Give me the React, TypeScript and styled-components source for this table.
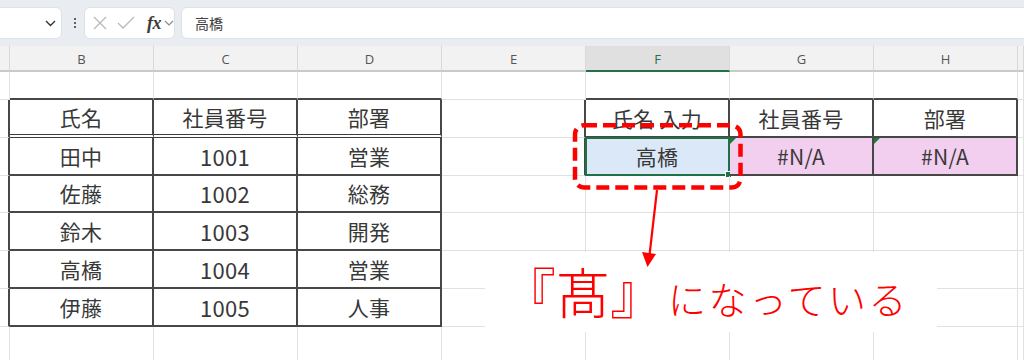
import React from "react";
import styled, { createGlobalStyle } from "styled-components";

const Global = createGlobalStyle`
  html, body { margin: 0; padding: 0; background: #ffffff; }
  body { width: 1024px; height: 360px; overflow: hidden; font-family: "Noto Sans CJK JP", "Noto Sans", sans-serif; }
`;

const Page = styled.div`
  position: relative;
  width: 1024px;
  height: 360px;
  overflow: hidden;
  background: #ffffff;
`;

/* ---------- Formula toolbar ---------- */
const Toolbar = styled.div`
  height: 46px;
  box-sizing: border-box;
  padding-top: 7px;
  background: #e9edf1;
  display: flex;
  align-items: flex-start;
`;

const Box = styled.div<{ $w?: string; $ml?: string }>`
  height: 32px;
  box-sizing: border-box;
  background: #ffffff;
  border: 1px solid #dde2e7;
  border-radius: 6px;
  display: flex;
  align-items: center;
  width: ${(p) => p.$w || "auto"};
  margin-left: ${(p) => p.$ml || "0"};
`;

const NameBox = styled(Box)`
  justify-content: flex-end;
  padding-right: 5px;
`;

const FxBox = styled(Box)`
  padding-left: 8px;
`;

const FormulaBox = styled(Box)`
  flex: 1;
  margin-right: -20px;
  padding-left: 13px;
  font-size: 14px;
  color: #404040;
`;

const Dots = styled.div`
  width: 12px;
  height: 32px;
  display: flex;
  flex-direction: column;
  align-items: center;
  justify-content: center;
  gap: 2px;
  margin: 0 3px 0 7px;
  & > span {
    width: 2px;
    height: 2px;
    border-radius: 1px;
    background: #333;
  }
`;

const Fx = styled.span`
  font-family: "Liberation Serif", serif;
  font-style: italic;
  font-weight: bold;
  font-size: 18px;
  color: #3a3a3a;
  margin-left: 12px;
  letter-spacing: -0.5px;
`;

/* ---------- Sheet grid ---------- */
const Sheet = styled.div`
  display: grid;
  grid-template-columns: 10px repeat(7, 144px) 1fr;
  grid-template-rows: 26px 28px repeat(7, 37.8px);
`;

const ColHead = styled.div<{ $sel?: boolean }>`
  box-sizing: border-box;
  background: ${(p) => (p.$sel ? "#e0e0e0" : "#f2f2f2")};
  border-right: 1px solid #d8d8d8;
  border-bottom: ${(p) => (p.$sel ? "2px solid #217346" : "2px solid #c9c9c9")};
  display: flex;
  align-items: center;
  justify-content: center;
  font-family: "Open Sans", "Noto Sans", sans-serif;
  font-size: 13px;
  color: ${(p) => (p.$sel ? "#2f6e45" : "#555555")};
  padding-top: 1px;
`;

type Edge = "grid" | "thin" | "double";

const edge = (e: Edge) =>
  e === "thin"
    ? "2px solid #474747"
    : e === "double"
    ? "4px double #3d3d3d"
    : "1px solid #e1e1e1";

const Cell = styled.div<{ $r?: Edge; $b?: Edge; $fill?: string; $num?: boolean }>`
  position: relative;
  box-sizing: border-box;
  border-right: ${(p) => edge(p.$r || "grid")};
  border-bottom: ${(p) => edge(p.$b || "grid")};
  background: ${(p) => p.$fill || "transparent"};
  display: flex;
  align-items: center;
  justify-content: center;
  font-family: "Noto Sans CJK JP", sans-serif;
  font-size: ${(p) => (p.$num ? "22px" : "21px")};
  color: #383838;
  white-space: pre;
  letter-spacing: ${(p) => (p.$num ? "0.3px" : "0.3px")};
`;

const Selection = styled.div`
  position: absolute;
  top: -1px;
  left: -1px;
  right: -2px;
  bottom: -2px;
  border: 2px solid #1e7145;
  pointer-events: none;
`;

const FillHandle = styled.div`
  position: absolute;
  right: -4px;
  bottom: -4px;
  width: 5px;
  height: 5px;
  background: #1e7145;
  border: 1px solid #ffffff;
`;

const ErrorMark = styled.div`
  position: absolute;
  top: 0;
  left: 0;
  width: 0;
  height: 0;
  border-top: 6px solid #1d7a3c;
  border-right: 6px solid transparent;
`;

/* ---------- Annotation ---------- */
const Overlay = styled.svg`
  position: absolute;
  left: 0;
  top: 0;
  pointer-events: none;
`;

const Callout = styled.div`
  position: absolute;
  left: 485px;
  top: 252px;
  width: 452px;
  height: 80px;
  background: #ffffff;
  display: flex;
  align-items: baseline;
  padding-left: 17px;
  padding-top: 6px;
  box-sizing: border-box;
  color: #ff0000;
  font-family: "Noto Sans CJK JP", sans-serif;
`;

const BigText = styled.span`
  font-size: 54px;
  font-weight: 300;
  line-height: 66px;
`;

const SmallText = styled.span`
  font-size: 38px;
  font-weight: 300;
  margin-left: 4px;
  letter-spacing: 2.5px;
`;

const cols = ["", "B", "C", "D", "E", "F", "G", "H", ""];

type Spec = {
  t?: string;
  r?: Edge;
  b?: Edge;
  fill?: string;
  num?: boolean;
  sel?: boolean;
  err?: boolean;
};

const leftRows: [string, string, string][] = [
  ["田中", "1001", "営業"],
  ["佐藤", "1002", "総務"],
  ["鈴木", "1003", "開発"],
  ["高橋", "1004", "営業"],
  ["伊藤", "1005", "人事"],
];

function buildRows(): Spec[][] {
  const rows: Spec[][] = [];
  rows.push([
    {},
    { b: "thin" },
    { b: "thin" },
    { b: "thin" },
    {},
    { b: "thin" },
    { b: "thin" },
    { b: "thin" },
    {},
  ]);
  rows.push([
    { r: "thin" },
    { t: "氏名", r: "thin", b: "double" },
    { t: "社員番号", r: "thin", b: "double" },
    { t: "部署", r: "thin", b: "double" },
    { r: "thin" },
    { t: "氏名 入力", r: "thin", b: "thin" },
    { t: "社員番号", r: "thin", b: "thin" },
    { t: "部署", r: "thin", b: "thin" },
    {},
  ]);
  leftRows.forEach((lr, i) => {
    const first = i === 0;
    rows.push([
      { r: "thin" },
      { t: lr[0], r: "thin", b: "thin" },
      { t: lr[1], r: "thin", b: "thin", num: true },
      { t: lr[2], r: "thin", b: "thin" },
      first ? { r: "thin" } : {},
      first ? { t: "高橋", r: "thin", b: "thin", fill: "#dae8f7", sel: true } : {},
      first ? { t: "#N/A", r: "thin", b: "thin", fill: "#f2cfef", err: true } : {},
      first ? { t: "#N/A", r: "thin", b: "thin", fill: "#f2cfef", err: true } : {},
      {},
    ]);
  });
  rows.push(Array.from({ length: 9 }, () => ({})));
  return rows;
}

export default function App() {
  const rows = buildRows();
  return (
    <Page>
      <Global />
      <Toolbar>
        <NameBox $w="72px" $ml="-10px">
          <svg width="11" height="7" viewBox="0 0 11 7">
            <path d="M1 1 L5.5 5.5 L10 1" fill="none" stroke="#333" strokeWidth="1.4" />
          </svg>
        </NameBox>
        <Dots>
          <span />
          <span />
          <span />
        </Dots>
        <FxBox $w="91px">
          <svg width="14" height="14" viewBox="0 0 14 14">
            <path d="M1 1 L13 13 M13 1 L1 13" stroke="#b9b9b9" strokeWidth="1.3" />
          </svg>
          <svg width="18" height="14" viewBox="0 0 18 14" style={{ marginLeft: 10 }}>
            <path d="M1 7 L6 12 L17 1" fill="none" stroke="#b9b9b9" strokeWidth="1.3" />
          </svg>
          <Fx>fx</Fx>
          <svg width="10" height="6" viewBox="0 0 10 6" style={{ marginLeft: 3 }}>
            <path d="M1 1 L5 5 L9 1" fill="none" stroke="#8a8a8a" strokeWidth="1.2" />
          </svg>
        </FxBox>
        <FormulaBox $ml="6px">高橋</FormulaBox>
      </Toolbar>
      <Sheet>
        {cols.map((c, i) => (
          <ColHead key={"h" + i} $sel={c === "F"}>
            {c}
          </ColHead>
        ))}
        {rows.map((row, ri) =>
          row.map((s, ci) => (
            <Cell key={ri + "-" + ci} $r={s.r} $b={s.b} $fill={s.fill} $num={s.num}>
              {s.t}
              {s.err && <ErrorMark />}
              {s.sel && (
                <Selection>
                  <FillHandle />
                </Selection>
              )}
            </Cell>
          ))
        )}
      </Sheet>
      <Callout>
        <BigText>『髙』</BigText>
        <SmallText>になっている</SmallText>
      </Callout>
      <Overlay width="1024" height="360" viewBox="0 0 1024 360">
        <rect
          x="575"
          y="125.3"
          width="165.5"
          height="62.2"
          rx="9"
          fill="none"
          stroke="#ff0000"
          strokeWidth="4.5"
          strokeDasharray="13 6"
        />
        <line x1="657" y1="190" x2="649.5" y2="255" stroke="#ff0000" strokeWidth="2.2" />
        <polygon points="642,252 656,254 647.5,267" fill="#ff0000" />
      </Overlay>
    </Page>
  );
}
